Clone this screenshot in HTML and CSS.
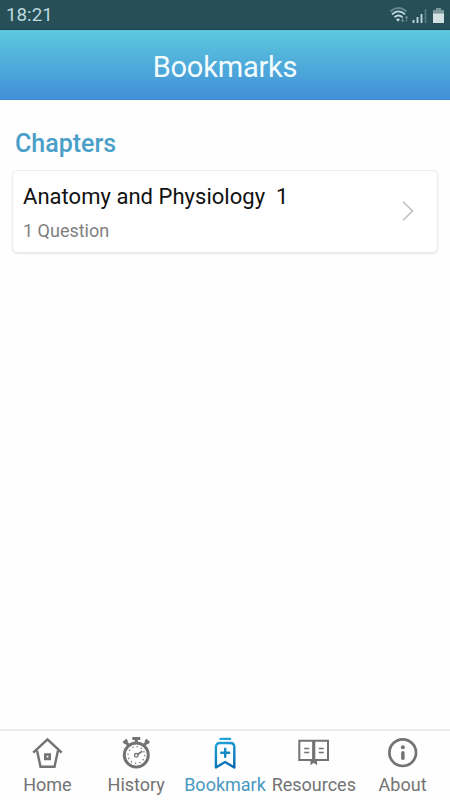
FILE: index.html
```html
<!DOCTYPE html>
<html lang="en">
<head>
    <meta charset="UTF-8">
    <meta name="viewport" content="width=device-width, initial-scale=1.0">
    <title>Bookmarks</title>
    <link rel="stylesheet" href="styles.css">
</head>
<body>
    <div class="status-bar">
        <span class="clock">18:21</span>
        <svg class="status-icons" width="56" height="20" viewBox="0 0 56 20">
            <!-- wifi -->
            <g fill="none" stroke-width="1.8">
                <path d="M1.5 5.5Q9.5-1.5 17.5 5.5" stroke="#64868c"/>
                <path d="M3 8.3Q9.5 2.5 16 8.3" stroke="#c3dbe0"/>
                <path d="M5.5 11.3Q9.5 7.8 13.5 11.3" stroke="#c3dbe0"/>
            </g>
            <path d="M7 13.3Q9 11.8 11 13.3L9 15.8z" fill="#c3dbe0"/>
            <path d="M13.6 10.5v5M12.2 14l1.4 1.7 1.4-1.7M17.6 15.5v-5M16.2 12l1.4-1.7 1.4 1.7" fill="none" stroke="#6f9198" stroke-width="1"/>
            <!-- signal -->
            <path d="M24.5 14v3M28.5 11v6M32.5 8v9" stroke="#c3dbe0" stroke-width="1.8"/>
            <path d="M36.5 3.2V17" stroke="#557a81" stroke-width="1.8"/>
            <!-- battery -->
            <path d="M47 2h5v2h3v4H44V4h3z" fill="#7d999e"/>
            <path d="M44 7.5h11V17H44z" fill="#d3e0e3"/>
        </svg>
    </div>

    <header class="header">
        <h1 class="title">Bookmarks</h1>
    </header>

    <main class="content">
        <h2 class="section-title">Chapters</h2>
        <div class="card">
            <div class="card-text">
                <p class="card-title">Anatomy and Physiology&nbsp; 1</p>
                <p class="card-subtitle">1 Question</p>
            </div>
            <svg class="chevron" width="12" height="20" viewBox="0 0 12 20">
                <path d="M1 .8L10.5 10 1 19.2" fill="none" stroke="#c0c0c2" stroke-width="1.6"/>
            </svg>
        </div>
    </main>

    <nav class="tab-bar">
        <a class="tab">
            <svg width="32" height="32" viewBox="0 0 32 32" fill="none" stroke="currentColor">
                <path d="M2.2 15.7L16.5 2.4l14.2 13.3" stroke-width="2.5"/>
                <path d="M6 13.5l3.5 16.2h14L27 13.5" stroke-width="2.4"/>
                <path d="M14.3 17.5h4.4v4.4h-4.4z" stroke-width="2.6"/>
            </svg>
            <span>Home</span>
        </a>
        <a class="tab">
            <svg width="32" height="32" viewBox="0 0 32 32" fill="none" stroke="currentColor">
                <circle cx="16.3" cy="18" r="12" stroke-width="3"/>
                <circle cx="16.3" cy="18" r="8.3" stroke-width="1.3" stroke-dasharray="1.3 3.046"/>
                <path d="M12.3 1.5h8M16.3 1.5V6" stroke-width="3"/>
                <path d="M3.6 6.2l3.6-3.4M5.3 4.5l3 3.5M29 6.2l-3.6-3.4M27.3 4.5l-3 3.5" stroke-width="3"/>
                <circle cx="16.3" cy="18.3" r="1.8" stroke-width="1.3"/>
                <path d="M17.8 17.2l4.5-3" stroke-width="1.7"/>
            </svg>
            <span>History</span>
        </a>
        <a class="tab active">
            <svg width="32" height="32" viewBox="0 0 32 32" fill="none" stroke="url(#bookmark-stroke)" stroke-width="2.4" stroke-linecap="round" stroke-linejoin="round">
                <defs>
                    <linearGradient id="bookmark-stroke" gradientUnits="userSpaceOnUse" x1="6" y1="2" x2="20" y2="32">
                        <stop offset="0" stop-color="#22addd"/>
                        <stop offset="1" stop-color="#0768b2"/>
                    </linearGradient>
                </defs>
                <path d="M11.5 1.9h9.5"/>
                <path d="M6.9 30.5V10q0-4 4-4h10.4q4 0 4 4v20.5L16.1 25z"/>
                <path d="M16.2 11.7v8M12.2 15.7h8"/>
            </svg>
            <span>Bookmark</span>
        </a>
        <a class="tab">
            <svg width="32" height="32" viewBox="0 0 32 32" fill="none" stroke="currentColor">
                <path d="M1.3 3.7H30v19.2H1.3z" stroke-width="2"/>
                <path d="M15.7 3v20.5" stroke-width="3.2"/>
                <path d="M6.2 11.5h5M6.2 15.5h5M20.8 11.5h5M20.8 15.5h5" stroke-width="1.5"/>
                <path d="M12.5 23H19v5.3l-3.2-2.5-3.3 2.5z" fill="currentColor" stroke="none"/>
            </svg>
            <span>Resources</span>
        </a>
        <a class="tab">
            <svg width="32" height="32" viewBox="0 0 32 32" fill="none" stroke="currentColor">
                <circle cx="15.7" cy="15.7" r="13.3" stroke-width="2.7"/>
                <circle cx="15.9" cy="10.3" r="2" fill="currentColor" stroke="none"/>
                <path d="M15.9 15.8v5.5" stroke-width="3.5" stroke-linecap="round"/>
            </svg>
            <span>About</span>
        </a>
    </nav>
</body>
</html>
```
FILE: styles.css
```css
body {
    margin: 0;
    height: 100vh;
    display: flex;
    flex-direction: column;
    overflow: hidden;
    background: #fefefe;
    font-family: Roboto, "Liberation Sans", sans-serif;
}

h1, h2, p {
    margin: 0;
    font-weight: 400;
}

.status-bar {
    box-sizing: border-box;
    height: 30px;
    padding: 1px 5px 0 6px;
    display: flex;
    justify-content: space-between;
    align-items: center;
    background: #264f57;
    border-bottom: 1px solid #1c434d;
}

.clock {
    color: #bdd9df;
    font-size: 18.8px;
}

.status-icons {
    margin-top: 1px;
}

.header {
    box-sizing: border-box;
    height: 70px;
    padding-top: 4px;
    display: flex;
    justify-content: center;
    align-items: center;
    background: linear-gradient(#5cc8dd, #4290d8);
    border-bottom: 1px solid #3d87c8;
}

.title {
    color: #f3fdff;
    font-size: 29px;
    letter-spacing: -0.2px;
}

.content {
    flex: 1;
    padding: 28px 12px 0;
}

.section-title {
    margin: 0 0 10px 3px;
    color: #4a9fc8;
    font-size: 25px;
    font-weight: 500;
    line-height: 32px;
}

.card {
    box-sizing: border-box;
    height: 83px;
    padding: 11px 23px 0 10px;
    display: flex;
    justify-content: space-between;
    background: #fff;
    border: 1px solid #ececec;
    border-radius: 5px;
    box-shadow: 0 1px 2px rgba(0, 0, 0, 0.1);
}

.card-title {
    color: #111;
    font-size: 22px;
    line-height: 30px;
    letter-spacing: 0.03px;
}

.card-subtitle {
    margin-top: 7px;
    color: #808080;
    font-size: 18px;
    line-height: 24px;
}

.chevron {
    margin-top: 19px;
}

.tab-bar {
    box-sizing: border-box;
    height: 71px;
    padding: 6px 3px 0;
    display: flex;
    border-top: 2px solid #ececec;
}

.tab {
    flex: 1 1 0;
    min-width: 0;
    display: flex;
    flex-direction: column;
    align-items: center;
    color: #737373;
    font-size: 18px;
    line-height: 24px;
    white-space: nowrap;
}

.tab svg {
    margin-bottom: 4px;
}

.tab.active {
    color: #4799c1;
}
```
